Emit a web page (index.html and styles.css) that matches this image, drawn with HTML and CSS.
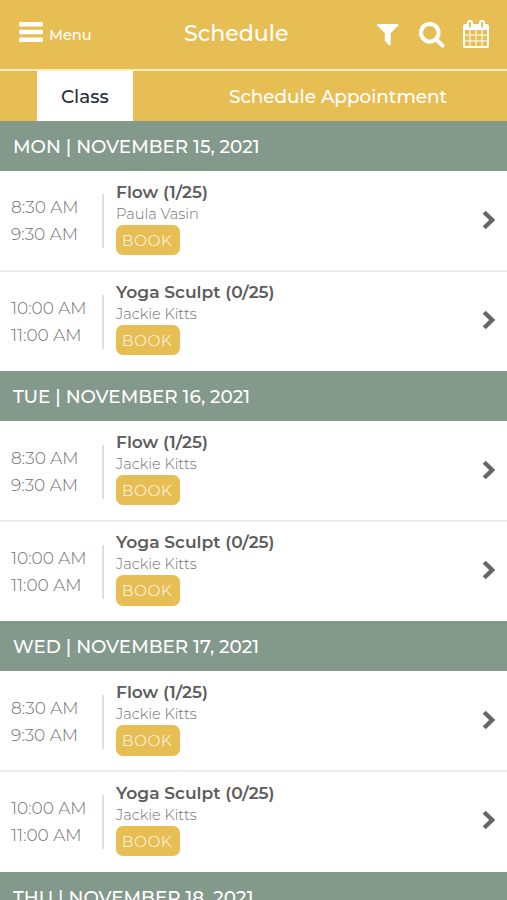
FILE: index.html
```html
<!DOCTYPE html>
<html lang="en">
<head>
<meta charset="utf-8">
<title>Schedule</title>
<link rel="stylesheet" href="styles.css">
</head>
<body>
<header class="topbar">
  <div class="menu">
    <svg class="bars" viewBox="0 0 24 20"><rect width="24" height="4.4" rx="1.2"/><rect y="7.8" width="24" height="4.4" rx="1.2"/><rect y="15.6" width="24" height="4.4" rx="1.2"/></svg>
    <span class="menu-label">Menu</span>
  </div>
  <h1 class="title">Schedule</h1>
  <div class="actions">
    <svg class="icon" viewBox="0 0 1792 1792"><path d="M1595 295q17 41-14 70l-493 493v742q0 42-39 59-13 5-25 5-27 0-45-19l-256-256q-19-19-19-45v-486l-493-493q-31-29-14-70 17-39 59-39h1280q42 0 59 39z"/></svg>
    <svg class="icon" viewBox="0 0 1792 1792"><path d="M1216 832q0-185-131.500-316.500t-316.500-131.500-316.500 131.500-131.500 316.500 131.500 316.500 316.500 131.500 316.500-131.500 131.500-316.500zm512 832q0 52-38 90t-90 38q-54 0-90-38l-343-342q-179 124-399 124-143 0-273.500-55.500t-225-150-150-225-55.500-273.500 55.500-273.500 150-225 225-150 273.500-55.500 273.500 55.500 225 150 150 225 55.500 273.500q0 220-124 399l343 343q37 37 37 90z"/></svg>
    <svg class="icon" viewBox="0 0 1792 1792"><path d="M192 1664h288v-288h-288v288zm352 0h320v-288h-320v288zm-352-352h288v-320h-288v320zm352 0h320v-320h-320v320zm-352-384h288v-288h-288v288zm736 736h320v-288h-320v288zm-384-736h320v-288h-320v288zm768 736h288v-288h-288v288zm-384-352h320v-320h-320v320zm-352-864v-288q0-13-9.500-22.500t-22.500-9.500h-64q-13 0-22.500 9.500t-9.500 22.500v288q0 13 9.500 22.500t22.500 9.500h64q13 0 22.500-9.500t9.500-22.500zm736 864h288v-320h-288v320zm-384-384h320v-288h-320v288zm384 0h288v-288h-288v288zm32-480v-288q0-13-9.500-22.500t-22.500-9.500h-64q-13 0-22.500 9.500t-9.500 22.500v288q0 13 9.500 22.500t22.500 9.500h64q13 0 22.500-9.500t9.500-22.500zm384-64v1280q0 52-38 90t-90 38h-1408q-52 0-90-38t-38-90v-1280q0-52 38-90t90-38h128v-96q0-66 47-113t113-47h64q66 0 113 47t47 113v96h384v-96q0-66 47-113t113-47h64q66 0 113 47t47 113v96h128q52 0 90 38t38 90z"/></svg>
  </div>
</header>
<nav class="tabs">
  <div class="tab tab-active">Class</div>
  <div class="tab"><span class="tab-appt">Schedule Appointment</span></div>
</nav>
<main>
  <section class="day">
    <h2 class="date">MON | NOVEMBER 15, 2021</h2>
    <article class="row">
      <div class="times"><span>8:30 AM</span><span>9:30 AM</span></div>
      <div class="info"><span class="name">Flow (1/25)</span><span class="teacher">Paula Vasin</span><span class="book">BOOK</span></div>
      <svg class="chevron" viewBox="0 0 14 20"><path d="M2.200 2.200L10.200 10L2.200 17.800"/></svg>
    </article>
    <article class="row">
      <div class="times"><span>10:00 AM</span><span>11:00 AM</span></div>
      <div class="info"><span class="name">Yoga Sculpt (0/25)</span><span class="teacher">Jackie Kitts</span><span class="book">BOOK</span></div>
      <svg class="chevron" viewBox="0 0 14 20"><path d="M2.200 2.200L10.200 10L2.200 17.800"/></svg>
    </article>
  </section>
  <section class="day">
    <h2 class="date">TUE | NOVEMBER 16, 2021</h2>
    <article class="row">
      <div class="times"><span>8:30 AM</span><span>9:30 AM</span></div>
      <div class="info"><span class="name">Flow (1/25)</span><span class="teacher">Jackie Kitts</span><span class="book">BOOK</span></div>
      <svg class="chevron" viewBox="0 0 14 20"><path d="M2.200 2.200L10.200 10L2.200 17.800"/></svg>
    </article>
    <article class="row">
      <div class="times"><span>10:00 AM</span><span>11:00 AM</span></div>
      <div class="info"><span class="name">Yoga Sculpt (0/25)</span><span class="teacher">Jackie Kitts</span><span class="book">BOOK</span></div>
      <svg class="chevron" viewBox="0 0 14 20"><path d="M2.200 2.200L10.200 10L2.200 17.800"/></svg>
    </article>
  </section>
  <section class="day">
    <h2 class="date">WED | NOVEMBER 17, 2021</h2>
    <article class="row">
      <div class="times"><span>8:30 AM</span><span>9:30 AM</span></div>
      <div class="info"><span class="name">Flow (1/25)</span><span class="teacher">Jackie Kitts</span><span class="book">BOOK</span></div>
      <svg class="chevron" viewBox="0 0 14 20"><path d="M2.200 2.200L10.200 10L2.200 17.800"/></svg>
    </article>
    <article class="row">
      <div class="times"><span>10:00 AM</span><span>11:00 AM</span></div>
      <div class="info"><span class="name">Yoga Sculpt (0/25)</span><span class="teacher">Jackie Kitts</span><span class="book">BOOK</span></div>
      <svg class="chevron" viewBox="0 0 14 20"><path d="M2.200 2.200L10.200 10L2.200 17.800"/></svg>
    </article>
  </section>
  <section class="day">
    <h2 class="date">THU | NOVEMBER 18, 2021</h2>
  </section>
</main>
</body>
</html>
```
FILE: styles.css
```css
* { box-sizing: border-box; }
html, body { margin: 0; height: 900px; overflow: hidden; }
body {
  width: 507px;
  background: #fff;
  font-family: Montserrat, Inter, sans-serif;
  color: #666;
}
span { white-space: nowrap; }
.topbar {
  display: grid;
  grid-template-columns: 184px 190px 1fr;
  height: 71px;
  background: #e7be53;
  border-bottom: 2px solid #fcedc4;
  color: #fff;
}
.menu { display: flex; align-items: flex-start; padding: 22px 0 0 19px; gap: 6px; }
.bars { width: 24px; height: 20px; fill: #fff; }
.menu-label { font-size: 14.600px; font-weight: 500; line-height: 20px; padding-top: 3px; }
.title { margin: 0; font-size: 22.100px; font-weight: 500; line-height: 67px; }
.actions { display: flex; padding-top: 20px; gap: 16px; }
.icon { width: 27.500px; height: 27.500px; fill: #fff; }
.icon:last-child { width: 28px; height: 28px; margin-left: 1px; }
.tabs {
  display: grid;
  grid-template-columns: 96.500px 1fr;
  height: 49.600px;
  padding-left: 36.500px;
  background: #e7be53;
  color: #fff;
  font-size: 18.400px;
  font-weight: 500;
  line-height: 51px;
}
.tab { height: 49.600px; }
.tab-active { background: #fff; color: #262d3f; padding-left: 24.500px; }
.tab-appt { margin-left: 96px; }
.day { height: 250.400px; }
.date {
  height: 50px;
  margin: 0;
  padding-left: 13px;
  background: #83998c;
  color: #fff;
  font-size: 18.350px;
  font-weight: 500;
  line-height: 51px;
}
.row {
  display: grid;
  grid-template-columns: 104px 1fr 25px;
  height: 100.200px;
}
.row + .row { border-top: 2px solid #ebebeb; margin-top: -1.200px; height: 101.400px; }
.times {
  display: flex;
  flex-direction: column;
  height: 54px;
  margin-top: 23.700px;
  padding-left: 11px;
  border-right: 2px solid #dedede;
  font-size: 17px;
  font-weight: 300;
  line-height: 27px;
  color: #707070;
}
.info { display: flex; flex-direction: column; align-items: flex-start; padding: 10px 0 0 12px; }
.row + .row .times { margin-top: 23px; }
.row + .row .info { padding-top: 9.200px; }
.name { font-size: 17.100px; font-weight: 600; line-height: 22px; color: #5c5c5c; }
.teacher { font-size: 14.600px; font-weight: 300; line-height: 22px; color: #707070; }
.book {
  width: 63.500px;
  height: 30.500px;
  padding-left: 6px;
  border-radius: 7px;
  background: #e7be53;
  color: #fff;
  font-size: 15px;
  font-weight: 300;
  line-height: 31px;
  letter-spacing: .9px;
}
.chevron { width: 14px; height: 20px; margin-top: 39px; fill: none; stroke: #666; stroke-width: 4.300; }
.row + .row .chevron { margin-top: 38px; }
```
